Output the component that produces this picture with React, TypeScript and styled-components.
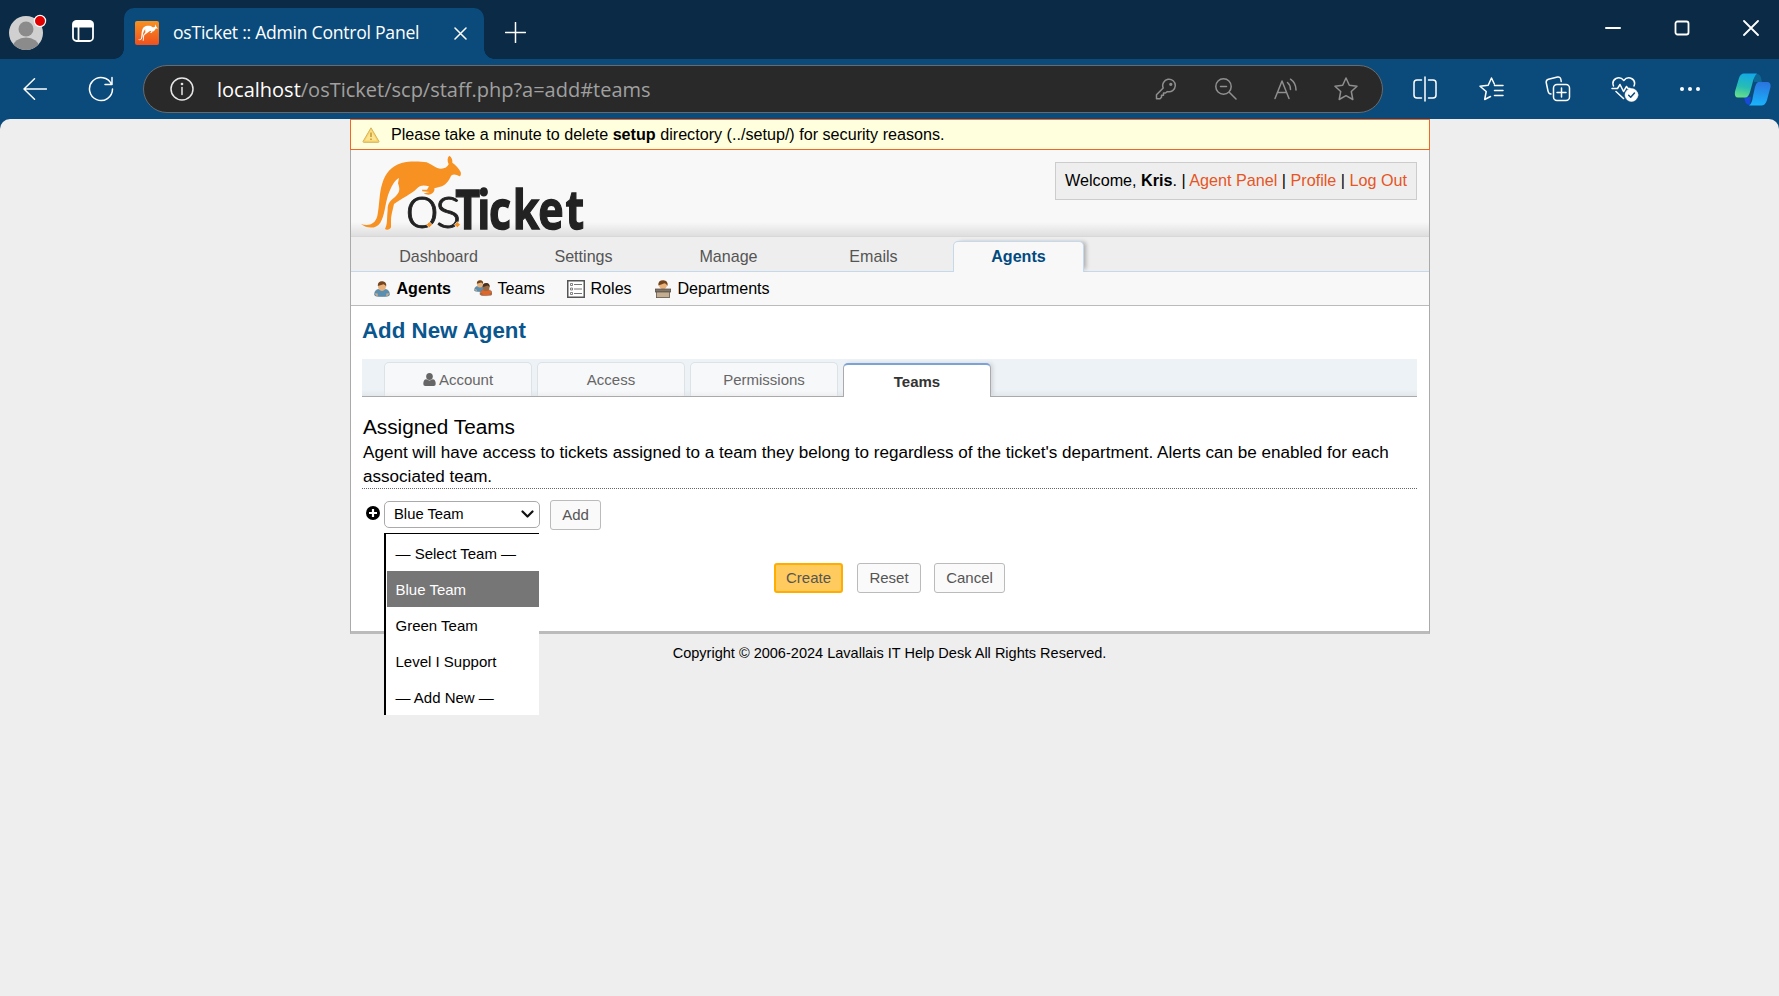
import React from "react";
import styled, { createGlobalStyle, css } from "styled-components";

const GlobalStyle = createGlobalStyle`
  *, *::before, *::after { box-sizing: border-box; }
  body {
    margin: 0;
    background: #0b4b7c;
    font-family: "Liberation Sans", Arial, sans-serif;
    color: #000;
    overflow: hidden;
  }
`;

const Window = styled.div`
  display: flex;
  flex-direction: column;
  width: 1779px;
  height: 996px;
`;

/* ---------- browser chrome ---------- */

const TitleBar = styled.header`
  display: flex;
  align-items: flex-end;
  height: 59px;
  background: #0a2a46;
  color: #fff;
  font-family: "Open Sans", "Noto Sans", sans-serif;
`;

const ProfileArea = styled.div`
  display: flex;
  align-items: center;
  width: 124px;
  height: 51px;
  padding: 0 0 5px 8px;
  gap: 24px;
`;

const BrowserTab = styled.div`
  position: relative;
  display: flex;
  align-items: center;
  width: 360px;
  height: 51px;
  padding: 0 17px 0 11px;
  border-radius: 10px 10px 0 0;
  background: #0b4b7c;

  &::before,
  &::after {
    content: "";
    position: absolute;
    bottom: 0;
    width: 10px;
    height: 10px;
  }
  &::before {
    left: -10px;
    background: radial-gradient(circle at 0 0, transparent 9.5px, #0b4b7c 10px);
  }
  &::after {
    right: -10px;
    background: radial-gradient(circle at 100% 0, transparent 9.5px, #0b4b7c 10px);
  }
  svg { margin-bottom: 1px; flex: none; }
`;

const TabTitle = styled.span`
  flex: 1;
  margin-left: 14px;
  padding-bottom: 3px;
  font-size: 17.6px;
  letter-spacing: -0.26px;
  white-space: nowrap;
`;

const NewTab = styled.div`
  display: flex;
  height: 51px;
  padding: 14px 0 0 21px;
`;

const WindowButtons = styled.div`
  display: flex;
  gap: 53px;
  height: 51px;
  margin-left: auto;
  padding: 12px 20px 0 0;
`;

const Toolbar = styled.div`
  display: flex;
  align-items: center;
  height: 60px;
  background: #0b4b7c;
  color: #fff;
`;

const Slot = styled.div<{ $w: number }>`
  display: flex;
  flex: none;
  align-items: center;
  justify-content: center;
  width: ${(p) => p.$w}px;
`;

const AddressBar = styled.div`
  display: flex;
  flex: none;
  align-items: center;
  width: 1240px;
  height: 48px;
  margin: 0 9px 0 12px;
  padding: 0 6px 0 8px;
  border: 1.5px solid #6a6a6a;
  border-radius: 24px;
  background: #292929;
  color: #8f8f8f;
`;

const Url = styled.span`
  flex: 1;
  margin-left: 5px;
  font-family: "Open Sans", "Noto Sans", sans-serif;
  font-size: 20px;
  color: #a0a0a0;
  white-space: nowrap;
  b { font-weight: 400; color: #fff; }
`;

/* ---------- page ---------- */

const Viewport = styled.main`
  flex: 1;
  border-radius: 10px 10px 0 0;
  background: #eee;
`;

const Page = styled.div`
  width: 1080px;
  margin: 0 0 0 350px;
`;

const Alert = styled.div`
  display: flex;
  align-items: center;
  height: 31px;
  padding-left: 11px;
  border: 1px solid #f26522;
  background: #ffffdd;
  font-size: 16.15px;
  line-height: 29px;
  white-space: pre;
  svg { margin-right: 11px; }
`;

const Panel = styled.div`
  height: 484px;
  border: solid #aaa;
  border-width: 0 1px 3px;
  border-bottom-color: #bbb;
  background: #fff;
`;

const Header = styled.div`
  display: flex;
  justify-content: space-between;
  height: 87px;
  padding: 0 12px 0 4px;
  border-bottom: 1px solid #d8d8d8;
  background: linear-gradient(#f8f8f8 0, #f8f8f8 72px, #dedede 86px);
`;

const UserInfo = styled.div`
  height: 38px;
  margin-top: 12px;
  padding: 0 9px;
  border: 1px solid #ccc;
  background: #eee;
  font-size: 16.17px;
  line-height: 35px;
  white-space: nowrap;
  a { color: #e65524; }
`;

const Nav = styled.nav`
  display: flex;
  gap: 14px;
  align-items: flex-end;
  height: 35px;
  padding-left: 22px;
  border-bottom: 1px solid #c5d9ec;
  background: #eee;
`;

const NavItem = styled.a<{ $active?: boolean }>`
  width: 131px;
  height: 31px;
  margin-bottom: -1px;
  border: 1px solid transparent;
  border-bottom: 0;
  font-size: 16.1px;
  line-height: 29px;
  text-align: center;
  color: #555;
  ${(p) =>
    p.$active &&
    css`
      border-color: #c5d9ec;
      border-radius: 5px 5px 0 0;
      background: #f8f8f8;
      box-shadow: 4px -1px 4px -2px rgba(0, 0, 0, 0.28);
      clip-path: inset(-6px -8px 0 -2px);
      color: #004a80;
      font-weight: 700;
    `}
`;

const SubNav = styled.nav`
  display: flex;
  align-items: center;
  height: 34px;
  padding-left: 23px;
  border-bottom: 1px solid #bbb;
  background: #f8f8f8;
  font-size: 16.1px;
`;

const SubNavItem = styled.a<{ $w: number; $gap?: number; $active?: boolean }>`
  display: flex;
  gap: ${(p) => p.$gap ?? 6.5}px;
  align-items: center;
  width: ${(p) => p.$w}px;
  font-weight: ${(p) => (p.$active ? 700 : 400)};
  white-space: nowrap;
  svg { flex: none; }
`;

const Content = styled.div`
  padding: 0 12px 0 11px;
`;

const Title = styled.h2`
  margin: 0;
  height: 53px;
  font-size: 22.3px;
  line-height: 50px;
  color: #0a568e;
`;

const Tabs = styled.div`
  display: flex;
  gap: 5px;
  align-items: flex-end;
  height: 38px;
  padding-left: 22px;
  border-bottom: 1px solid #aaa;
  background: linear-gradient(#edf2f7 0, #edf2f7 31px, #e2e7ec 37px);
`;

const Tab = styled.a<{ $active?: boolean }>`
  display: flex;
  align-items: center;
  justify-content: center;
  gap: 3px;
  width: 148px;
  height: 34px;
  border: 1px solid #dde2e6;
  border-bottom: 0;
  border-radius: 5px 5px 0 0;
  background: linear-gradient(#f7f8fa 0, #f7f8fa 28px, #ededee 34px);
  font-size: 15px;
  color: #666;
  ${(p) =>
    p.$active &&
    css`
      margin-bottom: -1px;
      border-color: #aaa;
      border-top: 2px solid #7da2d6;
      background: #fff;
      box-shadow: 3px -1px 4px -1px rgba(0, 0, 0, 0.12);
      clip-path: inset(-6px -8px 0 0);
      color: #333;
      font-weight: 700;
    `}
`;

const Section = styled.section`
  height: 92px;
  padding: 17px 1px 0;
  border-bottom: 1px dotted #666;
`;

const SectionTitle = styled.h3`
  margin: 0 0 2px;
  font-size: 20.75px;
  font-weight: 400;
  line-height: 25px;
`;

const SectionHint = styled.p`
  margin: 0;
  font-size: 17.08px;
  line-height: 24px;
`;

const AssignRow = styled.div`
  display: flex;
  align-items: center;
  height: 30px;
  margin-top: 11px;
  padding-left: 4px;
`;

const AddIcon = styled.svg`
  margin-bottom: 4px;
`;

const SelectWrap = styled.div`
  position: relative;
  margin: 0 10px 2px 4px;
`;

const Select = styled.div`
  display: flex;
  align-items: center;
  justify-content: space-between;
  width: 156px;
  height: 27px;
  padding: 0 5px 1px 9px;
  border: 1px solid #aaa;
  border-radius: 5px;
  font-size: 14.8px;
`;

const Menu = styled.ul`
  position: absolute;
  top: 32px;
  left: 0;
  width: 155px;
  margin: 0;
  padding: 1px 0 0 1px;
  border-top: 1px solid #000;
  border-left: 2px solid #000;
  background: #fff;
  list-style: none;
`;

const MenuItem = styled.li<{ $active?: boolean }>`
  height: 36px;
  padding-left: 8.5px;
  font-size: 15px;
  line-height: 37px;
  white-space: nowrap;
  background: ${(p) => (p.$active ? "#767676" : "#fff")};
  color: ${(p) => (p.$active ? "#fff" : "#000")};
`;

const Button = styled.button<{ $w: number; $primary?: boolean }>`
  width: ${(p) => p.$w}px;
  height: 30px;
  padding: 0 0 1px;
  border: 1px solid #bbb;
  border-radius: 3px;
  background: #fafafa;
  font: 15px "Liberation Sans", Arial, sans-serif;
  color: #555;
  ${(p) =>
    p.$primary &&
    css`
      border: 2px solid #ffae00;
      background: #ffcb5e;
    `}
`;

const Actions = styled.div`
  display: flex;
  padding: 33px 0 0 412px;
  button:nth-child(2) { margin: 0 13px 0 14px; }
`;

const Footer = styled.footer`
  padding: 9px 1px 0 0;
  font-size: 14.54px;
  line-height: 20px;
  text-align: center;
`;

/* ---------- drawings ---------- */

const KANGAROO =
  "M18 222 C40 229 60 224 67 198 C74 165 72 130 82 100 C92 68 110 48 140 39 C165 32 195 34 215 37 C232 44 243 56 258 56 C270 56 277 51 281 43 C276 32 277 22 283 17 C290 21 293 29 292 38 C301 44 311 55 317 66 C319 73 317 79 313 79 C304 74 297 71 288 77 C284 88 276 101 261 109 L238 115 C240 124 233 134 220 134 L206 131 L214 128 L224 126 L202 124 L201 119 L216 119 L222 109 C205 105 195 106 185 116 C170 132 140 144 117 162 C113 182 107 198 108 216 L108 232 C105 240 94 241 90 237 C98 222 95 207 98 180 C97 160 107 151 120 141 C137 126 134 114 129 100 L132 84 C118 91 108 111 99 136 C90 165 89 197 76 218 C63 237 37 237 18 222 Z";

const LogoSvg = styled.svg`
  overflow: visible;
  .light { font: 300 184px Lato, sans-serif; stroke-width: 2.5px; }
  .heavy { font: 700 161px "Open Sans", "Noto Sans", sans-serif; stroke-width: 4px; }
`;

const Logo = () => (
  <LogoSvg width="240" height="86" viewBox="0 0 720 258">
    <path d={KANGAROO} fill="#f79122" />
    <g fill="#222" stroke="#222">
      <text className="light" x="150 241" y="234">os</text>
      <text className="heavy" transform="translate(301 236) scale(0.8 1)" x="0 82 126 215 311 413" y="0">Ticket</text>
    </g>
    <path d="M223 215 l9 9 -9 9 -9 -9z M307 215 l9 9 -9 9 -9 -9z" fill="#f79122" stroke="#f8f8f8" strokeWidth="2" />
  </LogoSvg>
);

const Favicon = () => (
  <svg width="24" height="24" viewBox="0 0 24 24">
    <defs>
      <linearGradient id="fav" x1="0" y1="0" x2="0" y2="1">
        <stop offset="0" stopColor="#f69220" />
        <stop offset="1" stopColor="#f0501f" />
      </linearGradient>
    </defs>
    <rect width="24" height="24" rx="2" fill="url(#fav)" />
    <path transform="translate(1.7 2.2) scale(0.0655 0.073)" d={KANGAROO} fill="#fff" />
  </svg>
);

const Line = ({ w, h, d, color = "#fff", sw = 1.5, children }: {
  w: number; h: number; d?: string; color?: string; sw?: number; children?: React.ReactNode;
}) => (
  <svg width={w} height={h} viewBox={`0 0 ${w} ${h}`} fill="none" stroke={color} strokeWidth={sw} strokeLinecap="round" strokeLinejoin="round">
    {d && <path d={d} />}
    {children}
  </svg>
);

const Avatar = () => (
  <svg width="40" height="40" viewBox="0 0 40 40">
    <defs><clipPath id="av"><circle cx="18" cy="22" r="17" /></clipPath></defs>
    <circle cx="18" cy="22" r="17" fill="#d0d0d0" />
    <g clipPath="url(#av)" fill="#8b8b8b">
      <circle cx="18" cy="18" r="7.5" />
      <ellipse cx="18" cy="36" rx="13" ry="9.5" />
    </g>
    <circle cx="32" cy="10" r="5.6" fill="#e00000" stroke="#fff" strokeWidth="1.2" />
  </svg>
);

const Copilot = () => (
  <svg width="37" height="33" viewBox="0 0 37 33">
    <defs>
      <linearGradient id="cpA" x1="0.5" y1="0" x2="0.3" y2="1">
        <stop offset="0" stopColor="#13a9e4" />
        <stop offset="0.55" stopColor="#27bdb4" />
        <stop offset="1" stopColor="#68de88" />
      </linearGradient>
      <linearGradient id="cpB" x1="0.5" y1="0" x2="0.4" y2="1">
        <stop offset="0" stopColor="#2b74df" />
        <stop offset="1" stopColor="#19b4fb" />
      </linearGradient>
    </defs>
    <path d="M19 1 H23 Q26 1 27 5 L28 9 H20z" fill="#0d6795" />
    <path d="M10 24 H17 L16 32 Q12 32 11 28z" fill="#1849d8" />
    <path d="M10 0.5 H23 Q20 3 18.500 10 L16 19 Q14.500 24.500 11 24.500 H4 Q0 24.500 1 18.500 L5 5 Q6.500 0.500 10 0.500Z" fill="url(#cpA)" />
    <path d="M24 9 H33 Q37 9 36.500 14 L33 27 Q31.500 32.500 27 32.500 H15 Q18 31 19 23 L21 14 Q22 10 24 9Z" fill="url(#cpB)" />
  </svg>
);

const WarningIcon = () => (
  <svg width="18" height="16" viewBox="0 0 18 16">
    <path d="M9 .8 L17 14.500 Q17 15.300 16.500 15.300 H1.500 Q1 15.300 1 14.500Z" fill="#f7d56d" stroke="#d8b25a" />
    <path d="M9 3.500 L14.800 13.600 H3.200Z" fill="#fbe592" />
    <path d="M9 5.500 V10 M9 11.500 V13" stroke="#c9a03c" strokeWidth="1.700" />
  </svg>
);

const Person = ({ x = 0, y = 0, s = 1, shirt = "#5b8fb1", skin = "#e9b27c", hair = "#74451c" }) => (
  <g transform={`translate(${x} ${y}) scale(${s})`}>
    <path d="M.5 14 Q.5 8.500 5 8.300 H11 Q15.500 8.500 15.500 14 Q15 15.500 8 15.500 Q1 15.500 .5 14Z" fill={shirt} stroke="#54788d" strokeWidth=".5" />
    <path d="M1 13 h2 v2 M15 13 h-2 v2" stroke={skin} strokeWidth="1.200" fill="none" />
    <ellipse cx="8" cy="5.300" rx="4" ry="4.700" fill={skin} />
    <path d="M3.800 5 Q3.500 .3 8.300 .3 Q12.800 .5 12.200 5.500 Q11 3.500 9.500 3.200 Q6 4.500 3.800 5Z" fill={hair} />
  </g>
);

const AgentIcon = () => <svg width="16" height="16" viewBox="0 0 16 16"><Person /></svg>;
const TeamsIcon = () => (
  <svg width="18" height="17" viewBox="0 0 18 17">
    <Person s={0.75} />
    <Person x={5.500} y={2.800} s={0.83} shirt="#e0662a" skin="#9a6a45" hair="#49301f" />
  </svg>
);
const RolesIcon = () => (
  <svg width="18" height="18" viewBox="0 0 18 18">
    <rect x=".75" y=".75" width="16.500" height="16.500" fill="#fff" stroke="#555" strokeWidth="1.500" />
    <path d="M7 4.500h8M7 9h8M7 13.500h8" stroke="#777" />
    <path d="M3.500 3.500h2v2h-2zM3.500 8h2v2h-2zM3.500 12.500h2v2h-2z" fill="none" stroke="#666" strokeWidth=".8" />
  </svg>
);
const DeptIcon = () => (
  <svg width="16" height="18" viewBox="0 0 16 18">
    <ellipse cx="8" cy="5" rx="4" ry="4.300" fill="#e9b27c" />
    <path d="M3.300 5.500 Q2.800 .3 8.300 .3 Q13.300 .5 12.600 6 Q11 3.500 9.500 3.200 Q6 4.500 3.300 5.500Z" fill="#74451c" />
    <rect x=".3" y="9" width="15.400" height="3" fill="#817568" stroke="#4f4943" strokeWidth=".7" />
    <rect x="1.500" y="12" width="13" height="5.600" fill="#c4ad91" stroke="#5f564d" strokeWidth=".8" />
  </svg>
);

const teams = ["— Select Team —", "Blue Team", "Green Team", "Level I Support", "— Add New —"];

export default function App() {
  return (
    <Window>
      <GlobalStyle />
      <TitleBar>
        <ProfileArea>
          <Avatar />
          <Line w={22} h={22} sw={1.8}>
            <rect x="1" y="1" width="20" height="20" rx="3.500" />
            <path d="M1.500 2.500 H20.500 V6.500 H1.500Z" fill="#fff" />
            <path d="M6.500 7 V21" />
          </Line>
        </ProfileArea>
        <BrowserTab>
          <Favicon />
          <TabTitle>osTicket :: Admin Control Panel</TabTitle>
          <Line w={13} h={13} d="M1 1 L12 12 M12 1 L1 12" />
        </BrowserTab>
        <NewTab><Line w={21} h={21} d="M10.500 .5 V20.500 M.5 10.500 H20.500" /></NewTab>
        <WindowButtons>
          <Line w={16} h={16} sw={2} d="M1 8 H15" />
          <Line w={16} h={16} sw={1.8}><rect x="1.500" y="1.500" width="13" height="13" rx="2" /></Line>
          <Line w={16} h={16} sw={1.8} d="M1 1 L15 15 M15 1 L1 15" />
        </WindowButtons>
      </TitleBar>

      <Toolbar>
        <Slot $w={70}><Line w={24} h={22} d="M23.500 11 H1 M11.500 .8 L1 11 L11.500 21.200" /></Slot>
        <Slot $w={61}><Line w={26} h={26} d="M23.500 8.300 A11.500 11.500 0 1 0 24.500 13 M24 1.500 V8.500 H17" /></Slot>
        <AddressBar>
          <Slot $w={60}>
            <Line w={24} h={24} color="#e6e6e6" d="M12 10.500 V17.500">
              <circle cx="12" cy="12" r="11" />
              <circle cx="12" cy="7" r=".6" />
            </Line>
          </Slot>
          <Url><b>localhost</b>/osTicket/scp/staff.php?a=add#teams</Url>
          <Slot $w={60}>
            <Line w={22} h={22} color="#8f8f8f">
              <path d="M8.200 10 A6.300 6.300 0 1 1 12.300 13.600 L10.500 15 H8.500 V17.200 H6.500 V19.300 L5 20.800 H1.500 V16.800 Z" />
              <circle cx="15.800" cy="6.300" r=".9" />
            </Line>
          </Slot>
          <Slot $w={60}>
            <Line w={22} h={22} color="#8f8f8f" d="M14.500 14.500 L21 21 M5.500 8.500 H11.500"><circle cx="8.500" cy="8.500" r="7.700" /></Line>
          </Slot>
          <Slot $w={60}>
            <Line w={24} h={22} color="#8f8f8f" d="M1 20.500 L8 3 L15 20.500 M3.300 14.500 H12.700 M13.500 4.500 Q16.500 7 16.500 11.500 M16.500 1.200 Q22 5 22 12" />
          </Slot>
          <Slot $w={60}>
            <Line w={24} h={24} color="#8f8f8f" d="M12 1 L15.300 8.200 L23 9.200 L17.300 14.500 L18.800 22.500 L12 18.700 L5.200 22.500 L6.700 14.500 L1 9.200 L8.700 8.200Z" />
          </Slot>
        </AddressBar>
        <Slot $w={66}>
          <Line w={24} h={26} d="M12 1 V25 M8.500 4 H4 Q1 4 1 7 V19 Q1 22 4 22 H8.500 M15.500 4 H20 Q23 4 23 7 V19 Q23 22 20 22 H15.500" />
        </Slot>
        <Slot $w={67}>
          <Line w={26} h={24} d="M15.300 7 L12.500 1 L9.200 8.200 L1 9.200 L7.200 14.500 L5.700 22.500 L11.500 19.500 M15.500 8.500 H24 M15.500 13.500 H24 M15.500 18.500 H24" />
        </Slot>
        <Slot $w={66}>
          <Line w={26} h={26}>
            <rect x="8.500" y="8.500" width="16" height="16" rx="3.500" />
            <path d="M16.500 12 V21 M12 16.500 H21 M6 18 Q3.500 18 3 15 L1.200 6.500 Q1 4 3.500 3.300 L12.500 1 Q15.500 .5 16 4 L16.200 5.500" />
          </Line>
        </Slot>
        <Slot $w={67}>
          <Line w={28} h={26}>
            <path d="M2.500 10 Q.5 5 5 2.500 Q9.500 .5 12.800 4.500 Q16 .5 20.500 2.500 Q25 5 23 10 M1 12.500 H6.500 L9 8.500 L12.500 15.500 L15.500 10.500 L17 12.500 H19 M5 15.500 L12.500 22.500" />
            <circle cx="20.500" cy="19" r="6.500" fill="#fff" stroke="#fff" strokeWidth=".5" />
            <path d="M17.700 19.300 L19.700 21.200 L23.500 17" stroke="#0b4b7c" />
          </Line>
        </Slot>
        <Slot $w={64}>
          <svg width="20" height="4" viewBox="0 0 20 4" fill="#fff"><circle cx="2" cy="2" r="2" /><circle cx="10" cy="2" r="2" /><circle cx="18" cy="2" r="2" /></svg>
        </Slot>
        <Slot $w={61}><Copilot /></Slot>
      </Toolbar>

      <Viewport>
        <Page>
          <Alert>
            <WarningIcon />
            <span>Please take a minute to delete <b>setup</b> directory (../setup/) for security reasons.</span>
          </Alert>
          <Panel>
            <Header>
              <Logo />
              <UserInfo>
                Welcome, <b>Kris</b>. | <a>Agent Panel</a> | <a>Profile</a> | <a>Log Out</a>
              </UserInfo>
            </Header>
            <Nav>
              <NavItem>Dashboard</NavItem>
              <NavItem>Settings</NavItem>
              <NavItem>Manage</NavItem>
              <NavItem>Emails</NavItem>
              <NavItem $active>Agents</NavItem>
            </Nav>
            <SubNav>
              <SubNavItem $w={100} $active><AgentIcon />Agents</SubNavItem>
              <SubNavItem $w={93} $gap={5.5}><TeamsIcon />Teams</SubNavItem>
              <SubNavItem $w={88} $gap={5.5}><RolesIcon />Roles</SubNavItem>
              <SubNavItem $w={120}><DeptIcon />Departments</SubNavItem>
            </SubNav>
            <Content>
              <Title>Add New Agent</Title>
              <Tabs>
                <Tab>
                  <svg width="13" height="13" viewBox="0 0 13 13" fill="#666">
                    <ellipse cx="6.500" cy="3.500" rx="3.300" ry="3.500" />
                    <path d="M.3 11 Q.3 6.300 3.300 6.300 Q6.500 8.600 9.700 6.300 Q12.700 6.300 12.700 11 Q12.700 13 10.700 13 H2.300 Q.3 13 .3 11Z" />
                  </svg>
                  Account
                </Tab>
                <Tab>Access</Tab>
                <Tab>Permissions</Tab>
                <Tab $active>Teams</Tab>
              </Tabs>
              <Section>
                <SectionTitle>Assigned Teams</SectionTitle>
                <SectionHint>
                  Agent will have access to tickets assigned to a team they belong to regardless of the ticket's department. Alerts can be enabled for each associated team.
                </SectionHint>
              </Section>
              <AssignRow>
                <AddIcon width="14" height="14" viewBox="0 0 14 14">
                  <circle cx="7" cy="7" r="7" />
                  <path d="M7 3 V11 M3 7 H11" stroke="#fff" strokeWidth="2.200" />
                </AddIcon>
                <SelectWrap>
                  <Select>
                    Blue Team
                    <Line w={13} h={8} sw={2.2} color="#111" d="M1.500 1.500 L6.500 6.500 L11.500 1.500" />
                  </Select>
                  <Menu>
                    {teams.map((t) => (
                      <MenuItem key={t} $active={t === "Blue Team"}>{t}</MenuItem>
                    ))}
                  </Menu>
                </SelectWrap>
                <Button $w={51}>Add</Button>
              </AssignRow>
              <Actions>
                <Button $w={69} $primary>Create</Button>
                <Button $w={64}>Reset</Button>
                <Button $w={71}>Cancel</Button>
              </Actions>
            </Content>
          </Panel>
          <Footer>Copyright © 2006-2024 Lavallais IT Help Desk All Rights Reserved.</Footer>
        </Page>
      </Viewport>
    </Window>
  );
}
